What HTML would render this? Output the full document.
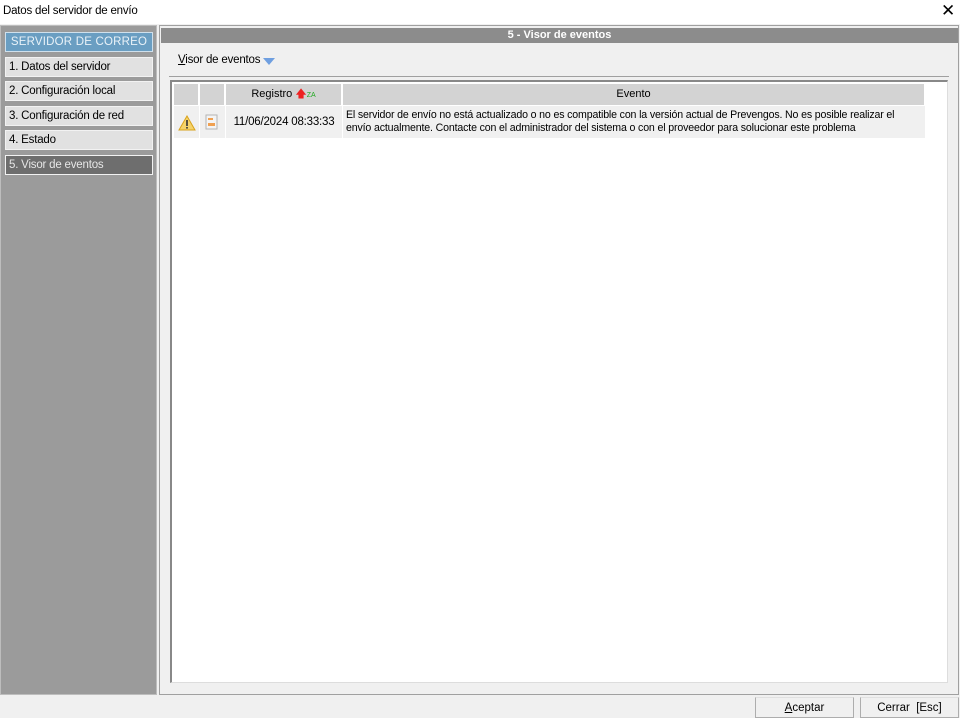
<!DOCTYPE html>
<html><head><meta charset="utf-8"><style>
*{margin:0;padding:0;box-sizing:border-box}
body{width:960px;height:718px;background:#f0f0f0;font-family:"Liberation Sans",sans-serif;font-size:11px;color:#000;position:relative;overflow:hidden}
.abs{position:absolute;white-space:nowrap}
.title{left:0;top:0;width:960px;height:24px;background:#fff}
.side{left:0;top:25px;width:157px;height:670px;background:#9b9b9b;border:1px solid #bdbdbd}
.item{position:absolute;left:4px;width:148px;height:20px;background:#e1e1e1;border:1px solid #f2f2f2;padding-left:3px;line-height:18px;font-size:11.5px;white-space:nowrap;letter-spacing:-0.2px}
.main{left:159px;top:25px;width:800px;height:670px;background:#f0f0f0;border:1px solid #a0a0a0}
.hdr{left:161px;top:28px;width:797px;height:15px;background:#8c8c8c;color:#fff;font-weight:bold;text-align:center;font-size:11px;line-height:15px}
.grid{left:170px;top:80px;width:778px;height:603px;background:#fff;border-left:2px solid #888;border-top:2px solid #888;border-right:1px solid #ddd;border-bottom:1px solid #ddd}
.th{position:absolute;top:2px;height:21px;background:#d3d3d3;border-right:1px solid #fff;text-align:center;line-height:21px;white-space:nowrap}
.td{position:absolute;top:24px;height:32px;background:#f0f0f0}
.btn{position:absolute;top:697px;height:21px;background:#f0f0f0;border:1px solid #adadad;border-top-color:#e0e0e0;text-align:center;line-height:20px;font-size:11.5px}
</style></head><body>
<div class="abs title"><span style="position:absolute;left:3px;top:5px;font-size:11.5px;letter-spacing:-0.2px">Datos del servidor de envío</span><span style="position:absolute;left:941px;top:1px;font-size:17px">✕</span></div>
<div class="abs side">
<div class="item" style="top:6px;background:#6a9ec2;color:#e9f2f8;text-align:center;border-color:#cfe0ec;padding:0;letter-spacing:0.2px">SERVIDOR DE CORREO</div>
<div class="item" style="top:31px">1. Datos del servidor</div>
<div class="item" style="top:55px">2. Configuración local</div>
<div class="item" style="top:80px">3. Configuración de red</div>
<div class="item" style="top:104px">4. Estado</div>
<div class="item" style="top:129px;background:#6e6e6e;color:#e6e6e6">5. Visor de eventos</div>
</div>
<div class="abs main"></div>
<div class="abs hdr">5 - Visor de eventos</div>
<div class="abs" style="left:178px;top:54px;font-size:11.5px;letter-spacing:-0.2px"><u>V</u>isor de eventos</div>
<div class="abs" style="left:263px;top:58px;width:0;height:0;border-left:6px solid transparent;border-right:6px solid transparent;border-top:7px solid #6f9fe0"></div>
<div class="abs" style="left:169px;top:76px;width:780px;height:1px;background:#a0a0a0"></div>
<div class="abs grid">
<div class="th" style="left:2px;width:25px"></div>
<div class="th" style="left:28px;width:25px"></div>
<div class="th" style="left:54px;width:116px">Registro <span style="color:#e22;font-size:11px">🡅</span><span style="color:#2a2;font-size:7px">ZA</span></div>
<div class="th" style="left:171px;width:582px">Evento</div>
<div class="td" style="left:2px;width:25px"><svg width="18" height="16" style="position:absolute;left:4px;top:9px"><path d="M9 1L17 15H1Z" fill="#f5d36a" stroke="#d9a21a"/><rect x="8.2" y="5" width="1.6" height="6" fill="#333"/><rect x="8.2" y="12" width="1.6" height="1.6" fill="#333"/></svg></div>
<div class="td" style="left:28px;width:25px"><svg width="14" height="16" style="position:absolute;left:5px;top:8px"><rect x="1" y="1" width="11" height="14" fill="#f4f4f4" stroke="#b5b5b5"/><rect x="3" y="4" width="5" height="2" fill="#f0a050"/><rect x="3" y="9" width="7" height="3" fill="#f0a050"/></svg></div>
<div class="td" style="left:54px;width:116px;text-align:center;line-height:32px;font-size:11.5px;letter-spacing:-0.2px">11/06/2024 08:33:33</div>
<div class="td" style="left:171px;width:582px;padding:3px 0 0 3px;line-height:13px;font-size:10.6px;letter-spacing:-0.15px">El servidor de envío no está actualizado o no es compatible con la versión actual de Prevengos. No es posible realizar el<br>envío actualmente. Contacte con el administrador del sistema o con el proveedor para solucionar este problema</div>
</div>
<div class="btn" style="left:755px;width:99px"><u>A</u>ceptar</div>
<div class="btn" style="left:860px;width:99px">Cerrar &nbsp;[Esc]</div>
</body></html>
